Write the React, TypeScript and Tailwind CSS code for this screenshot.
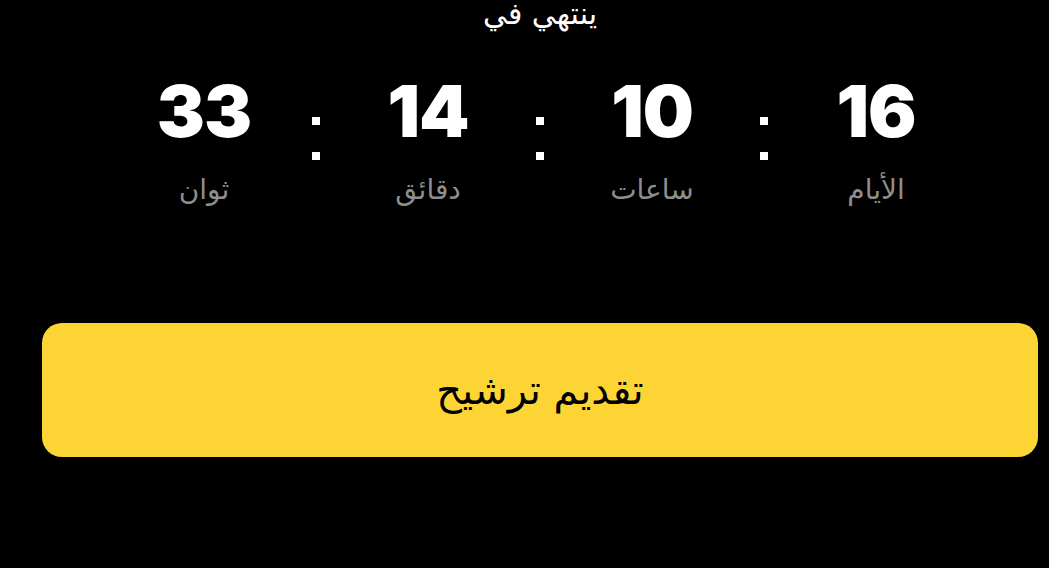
const units = [
  { value: '16', label: 'الأيام' },
  { value: '10', label: 'ساعات' },
  { value: '14', label: 'دقائق' },
  { value: '33', label: 'ثوان' },
];

function Colon() {
  return (
    <div className="flex w-[44px] shrink-0 flex-col items-center gap-[27px] pt-[38px]">
      <span className="h-[8px] w-[8px] bg-white" />
      <span className="h-[8px] w-[8px] bg-white" />
    </div>
  );
}

export default function App() {
  return (
    <div
      dir="rtl"
      className="flex h-[568px] w-full flex-col overflow-hidden bg-black pl-[42px] pr-[11px] text-white"
      style={{ fontFamily: '"DejaVu Sans", "Noto Sans", sans-serif' }}
    >
      <p className="mt-[-8px] text-center text-[30px] leading-[44px] text-white">ينتهي في</p>

      <div className="mt-[43px] flex justify-center">
        {units.map((unit, i) => (
          <div key={unit.label} className="flex">
            {i > 0 && <Colon />}
            <div className="flex w-[180px] shrink-0 flex-col items-center">
              <span
                dir="ltr"
                className="text-[72px] font-black leading-[64px] tracking-[-1px] text-white"
                style={{ fontFamily: 'Inter, "Noto Sans", sans-serif' }}
              >
                {unit.value}
              </span>
              <span className="mt-[29px] text-[28px] leading-[36px] text-[#8e8e8e]">{unit.label}</span>
            </div>
          </div>
        ))}
      </div>

      <button className="mt-[115px] flex h-[134px] w-full items-center justify-center rounded-[20px] bg-[#fcd535] text-[40px] text-black">
        تقديم ترشيح
      </button>
    </div>
  );
}
